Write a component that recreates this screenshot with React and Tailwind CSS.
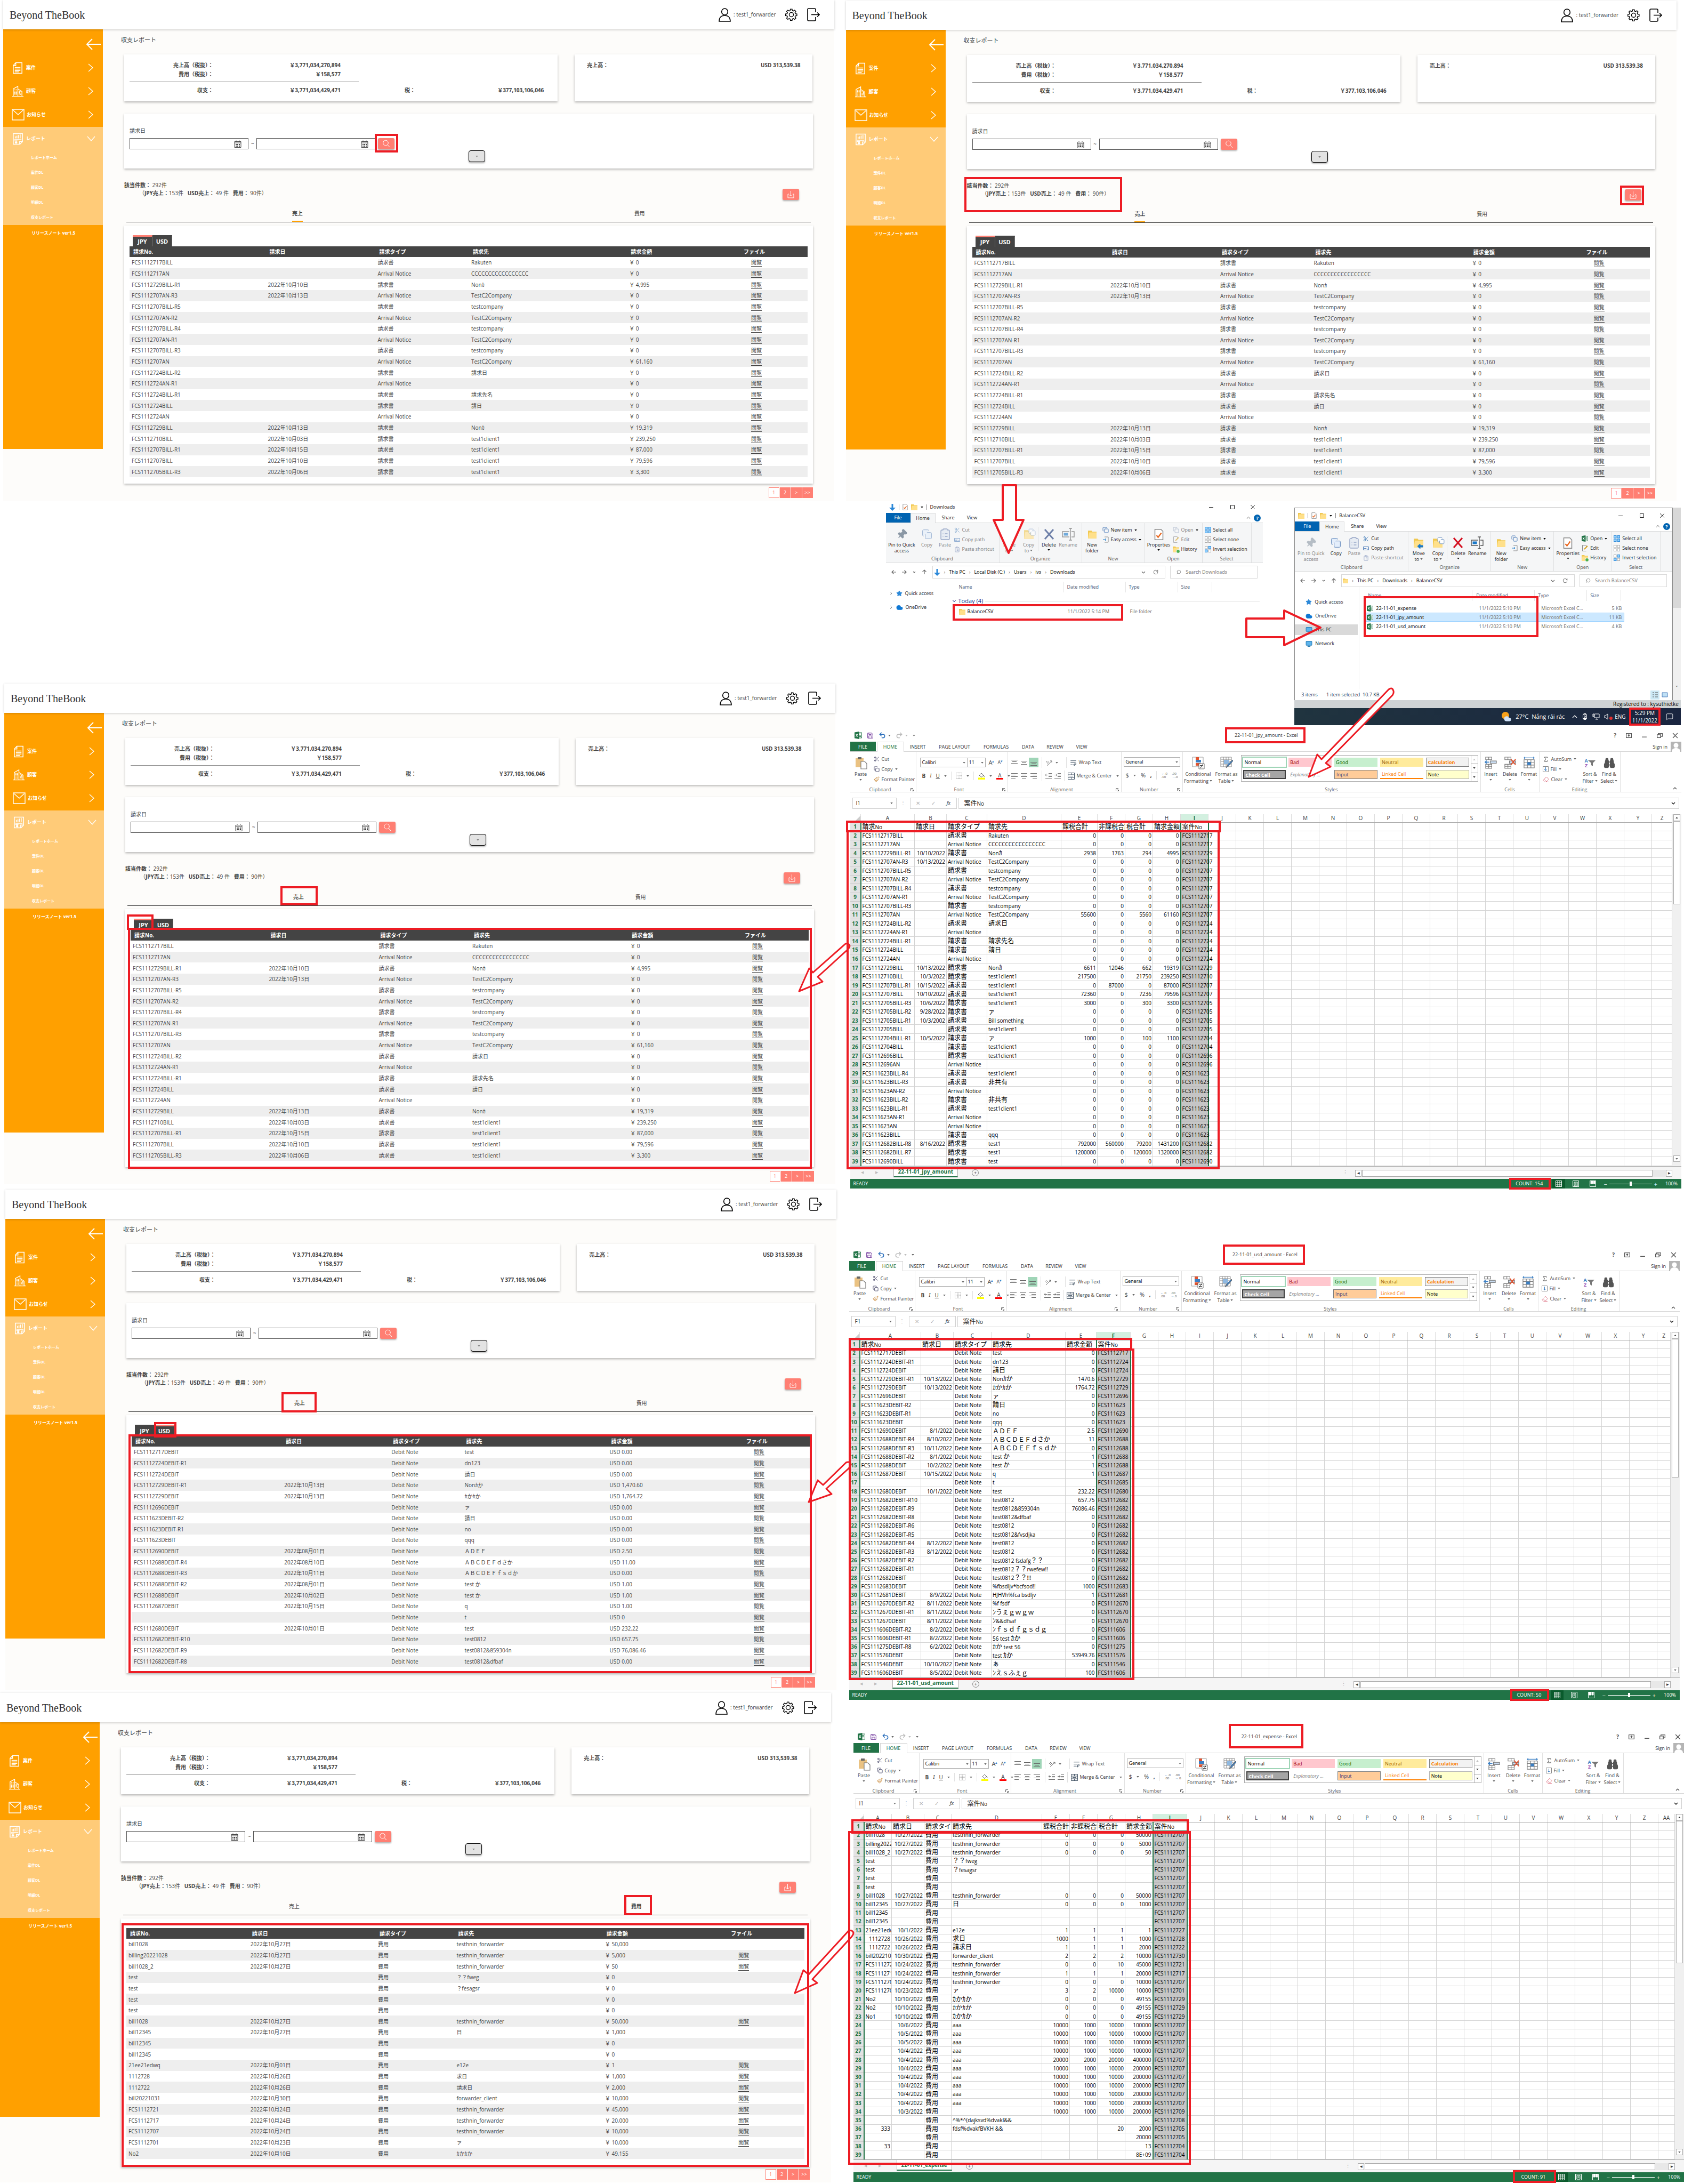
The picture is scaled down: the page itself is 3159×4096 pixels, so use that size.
import React from "react";
import {
  Scissors, Copy, ClipboardList, Pin, Save, Undo2, Redo2, Binoculars, Eraser, Paintbrush,
  Cloud, Monitor, Star, Search, RotateCw, MessageSquare, WrapText, Sigma,
} from "lucide-react";

const RED = "absolute z-10 pointer-events-none border-4 border-[#ed1c24]";

function Mark({ at }) {
  return at ? <span className={RED + " " + at} /> : null;
}

function Ico({ className, children, vb = "0 0 24 24", sw = 1.5, fill = "none" }) {
  return (
    <svg viewBox={vb} className={className} fill={fill} stroke="currentColor" strokeWidth={sw} aria-hidden="true">
      {children}
    </svg>
  );
}

function Caret({ className = "text-[#666]" }) {
  return (
    <svg viewBox="0 0 6 4" className={"h-[3px] w-[5px] shrink-0 " + className} aria-hidden="true">
      <path d="M0 0h6L3 4z" fill="currentColor" />
    </svg>
  );
}

/* ------------------------------------------------------------------ */
/* Balance report page                                                 */
/* ------------------------------------------------------------------ */

const JPY_ROWS = [
  ["FCS1112717BILL", "", "請求書", "Rakuten", "￥ 0", 1],
  ["FCS1112717AN", "", "Arrival Notice", "CCCCCCCCCCCCCCCCC", "￥ 0", 1],
  ["FCS1112729BILL-R1", "2022年10月10日", "請求書", "Nonｶ", "￥ 4,995", 1],
  ["FCS1112707AN-R3", "2022年10月13日", "Arrival Notice", "TestC2Company", "￥ 0", 1],
  ["FCS1112707BILL-R5", "", "請求書", "testcompany", "￥ 0", 1],
  ["FCS1112707AN-R2", "", "Arrival Notice", "TestC2Company", "￥ 0", 1],
  ["FCS1112707BILL-R4", "", "請求書", "testcompany", "￥ 0", 1],
  ["FCS1112707AN-R1", "", "Arrival Notice", "TestC2Company", "￥ 0", 1],
  ["FCS1112707BILL-R3", "", "請求書", "testcompany", "￥ 0", 1],
  ["FCS1112707AN", "", "Arrival Notice", "TestC2Company", "￥ 61,160", 1],
  ["FCS1112724BILL-R2", "", "請求書", "請求日", "￥ 0", 1],
  ["FCS1112724AN-R1", "", "Arrival Notice", "", "￥ 0", 1],
  ["FCS1112724BILL-R1", "", "請求書", "請求先名", "￥ 0", 1],
  ["FCS1112724BILL", "", "請求書", "請日", "￥ 0", 1],
  ["FCS1112724AN", "", "Arrival Notice", "", "￥ 0", 1],
  ["FCS1112729BILL", "2022年10月13日", "請求書", "Nonｶ", "￥ 19,319", 1],
  ["FCS1112710BILL", "2022年10月03日", "請求書", "test1client1", "￥ 239,250", 1],
  ["FCS1112707BILL-R1", "2022年10月15日", "請求書", "test1client1", "￥ 87,000", 1],
  ["FCS1112707BILL", "2022年10月10日", "請求書", "test1client1", "￥ 79,596", 1],
  ["FCS1112705BILL-R3", "2022年10月06日", "請求書", "test1client1", "￥ 3,300", 1],
];

const USD_ROWS = [
  ["FCS1112717DEBIT", "", "test", "USD 0.00"],
  ["FCS1112724DEBIT-R1", "", "dn123", "USD 0.00"],
  ["FCS1112724DEBIT", "", "請日", "USD 0.00"],
  ["FCS1112729DEBIT-R1", "2022年10月13日", "Nonｶか", "USD 1,470.60"],
  ["FCS1112729DEBIT", "2022年10月13日", "ｶかｶか", "USD 1,764.72"],
  ["FCS1112696DEBIT", "", "ァ", "USD 0.00"],
  ["FCS111623DEBIT-R2", "", "請日", "USD 0.00"],
  ["FCS111623DEBIT-R1", "", "no", "USD 0.00"],
  ["FCS111623DEBIT", "", "qqq", "USD 0.00"],
  ["FCS1112690DEBIT", "2022年08月01日", "ＡＤＥＦ", "USD 2.50"],
  ["FCS1112688DEBIT-R4", "2022年08月10日", "ＡＢＣＤＥＦｄさか", "USD 11.00"],
  ["FCS1112688DEBIT-R3", "2022年10月11日", "ＡＢＣＤＥＦｆｓｄか", "USD 0.00"],
  ["FCS1112688DEBIT-R2", "2022年08月01日", "test か", "USD 1.00"],
  ["FCS1112688DEBIT", "2022年10月02日", "test か", "USD 1.00"],
  ["FCS1112687DEBIT", "2022年10月15日", "q", "USD 1.00"],
  ["", "", "t", "USD 0"],
  ["FCS1112680DEBIT", "2022年10月01日", "test", "USD 232.22"],
  ["FCS1112682DEBIT-R10", "", "test0812", "USD 657.75"],
  ["FCS1112682DEBIT-R9", "", "test0812&859304n", "USD 76,086.46"],
  ["FCS1112682DEBIT-R8", "", "test0812&dfbaf", "USD 0.00"],
].map(([no, date, client, amount]) => [no, date, "Debit Note", client, amount, 1]);

const EXPENSE_ROWS = [
  ["bill1028", "2022年10月27日", "testhnin_forwarder", "￥ 50,000", 0],
  ["billing20221028", "2022年10月27日", "testhnin_forwarder", "￥ 5,000", 1],
  ["bill1028_2", "2022年10月27日", "testhnin_forwarder", "￥ 50", 1],
  ["test", "", "？？fweg", "￥ 0", 0],
  ["test", "", "？fesagsr", "￥ 0", 0],
  ["test", "", "", "￥ 0", 0],
  ["test", "", "", "￥ 0", 0],
  ["bill1028", "2022年10月27日", "testhnin_forwarder", "￥ 50,000", 1],
  ["bill12345", "2022年10月27日", "日", "￥ 1,000", 0],
  ["bill12345", "", "", "￥ 0", 0],
  ["bill12345", "", "", "￥ 0", 0],
  ["21ee21edwq", "2022年10月01日", "e12e", "￥ 1", 1],
  ["1112728", "2022年10月26日", "求日", "￥ 1,000", 1],
  ["1112722", "2022年10月26日", "請求日", "￥ 2,000", 1],
  ["bill20221031", "2022年10月30日", "forwarder_client", "￥ 10,000", 1],
  ["FCS1112721", "2022年10月24日", "testhnin_forwarder", "￥ 45,000", 1],
  ["FCS1112717", "2022年10月24日", "testhnin_forwarder", "￥ 20,000", 1],
  ["FCS1112707", "2022年10月24日", "testhnin_forwarder", "￥ 10,000", 1],
  ["FCS1112701", "2022年10月23日", "ァ", "￥ 10,000", 1],
  ["No2", "2022年10月10日", "ｶかｶか", "￥ 49,155", 0],
].map(([no, date, client, amount, file]) => [no, date, "費用", client, amount, file]);

const KINDS = {
  jpy: { rows: JPY_ROWS, cols: ["w-[20.1%]", "w-[16.2%]", "w-[13.8%]", "w-[23.3%]", "w-[11.6%]", "w-[15%]"] },
  usd: { rows: USD_ROWS, cols: ["w-[22.2%]", "w-[15.8%]", "w-[10.8%]", "w-[21.4%]", "w-[14.9%]", "w-[14.9%]"] },
  expense: { rows: EXPENSE_ROWS, cols: ["w-[18%]", "w-[18.8%]", "w-[11.6%]", "w-[21.9%]", "w-[11.9%]", "w-[17.8%]"] },
};

const UserIcon = () => (
  <Ico className="h-[26px] w-[23px]" vb="0 0 23 26" sw="1.6">
    <ellipse cx="11.5" cy="7" rx="5.8" ry="6" />
    <path d="M1 25c0-7 4-11 10.500-11S22 18 22 25z" />
  </Ico>
);

const GearIcon = () => (
  <Ico className="size-[23px]" sw="1.5">
    <path d="M10.300 1.500h3.400l.6 3 1.900.8 2.600-1.700 2.400 2.400-1.700 2.600.8 1.900 3 .6v3.400l-3 .6-.8 1.900 1.700 2.600-2.400 2.400-2.600-1.700-1.900.8-.6 3h-3.400l-.6-3-1.900-.8-2.600 1.700-2.400-2.400 1.700-2.600-.8-1.900-3-.6v-3.400l3-.6.8-1.900-1.700-2.600 2.400-2.400 2.600 1.700 1.900-.8z" transform="translate(0 -.3) scale(.98)" />
    <circle cx="12" cy="12" r="4.200" />
  </Ico>
);

const LogoutIcon = () => (
  <Ico className="h-[25px] w-[24px]" vb="0 0 24 25" sw="1.6">
    <path d="M16 8V3a2 2 0 0 0-2-2H3a2 2 0 0 0-2 2v19a2 2 0 0 0 2 2h11a2 2 0 0 0 2-2v-5M8 12.500h15M19 8.500l4 4-4 4" />
  </Ico>
);

const NAV = [
  { label: "案件", icon: <Ico className="size-[23px]" sw="1.6"><path d="M8 1.500h12v21H3V7zM8 1.500V7H3M6 11h11M6 14h11M6 17h11M6 19.500h8" /></Ico> },
  { label: "顧客", icon: <Ico className="size-[23px]" sw="1.4"><path d="M3 21V7l9-5v19M12 7l8 5v9M1 21.500h22" /><path d="M6 8v11M9 8v11M15 11v8M17.500 12v7" strokeWidth="2" strokeDasharray="1.500 1" /></Ico> },
  { label: "お知らせ", icon: <Ico className="size-[24px]" sw="1.4"><path d="M1 2h22v20H1zM2.500 3.500 12 12l9.500-8.500" /></Ico> },
];

function Sidebar({ height }) {
  return (
    <aside className={"w-[187px] shrink-0 bg-[#ffa000] text-white " + height}>
      <div className="flex h-[50px] justify-end pt-[17px] pr-1">
        <button type="button" aria-label="閉じる" className="h-[22px]">
          <Ico className="h-[22px] w-[28px]" vb="0 0 28 22" sw="2"><path d="M28 11H2M12 1 2 11l10 10" /></Ico>
        </button>
      </div>
      {NAV.map((n) => (
        <a key={n.label} href="#" className="flex h-[44px] items-center gap-1 pr-[18px] pl-4 text-[9px] font-bold">
          {n.icon}
          <span className="flex-1">{n.label}</span>
          <Ico className="h-[16px] w-[10px]" vb="0 0 10 16" sw="1.3"><path d="m1 1 8 7-8 7" /></Ico>
        </a>
      ))}
      <div className="mt-px h-[184px] bg-[#ffcb78]">
        <a href="#" className="flex h-[44px] items-center gap-1 pr-[14px] pl-4 text-[9px] font-bold">
          <Ico className="size-[23px]" sw="1.6"><path d="M3 1.500h18v16l-5 5H3zM7 7v4M10 6v5M13 4.500v6.500M16.500 3.500V11M5 13.500h14M5 16h6M15.500 22v-5H21" /><circle cx="8.500" cy="19" r="2.300" fill="currentColor" stroke="none" /></Ico>
          <span className="flex-1">レポート</span>
          <Ico className="h-[10px] w-[16px]" vb="0 0 16 10" sw="1.3"><path d="m1 1 7 8 7-8" /></Ico>
        </a>
        {["レポートホーム", "案件DL", "顧客DL", "明細DL", "収支レポート"].map((t) => (
          <a key={t} href="#" className="flex h-7 items-center pl-[52px] text-[7px] font-bold">{t}</a>
        ))}
      </div>
      <a href="#" className="block pt-2 pl-[53px] text-[8px] leading-[14px] font-bold">リリースノート ver1.5</a>
    </aside>
  );
}

const card = "bg-white shadow-[0_2px_4px_rgba(0,0,0,0.28)]";
const coral = "grid h-[21px] w-[31px] place-items-center rounded-[3px] bg-[#ff7f73] text-white shadow-[0_2px_3px_rgba(0,0,0,0.3)]";

function DateBox({ id, label }) {
  return (
    <div className="flex h-[21px] w-[223px] items-center border border-[#555] bg-white pr-3">
      <input id={id} aria-label={label} className="h-full min-w-0 flex-1 px-1 text-[10px] outline-none" />
      <Ico className="size-[14px] text-[#444]" vb="0 0 14 14" sw="1">
        <path d="M1 2.500h12v11H1zM1 5h12M4 .5v2.500M10 .5v2.500" />
        <path d="M3 8h8M3 11h8" strokeWidth="2" strokeDasharray="2 1" />
      </Ico>
    </div>
  );
}

function Report({ id, kind, className, side = "h-[787px]", marks = {} }) {
  const { rows, cols } = KINDS[kind];
  const expense = kind === "expense";
  const tabs = [["売上", !expense], ["費用", expense]];
  return (
    <section className={"relative bg-[#fdfcfa] font-['Open_Sans','Noto_Sans_CJK_JP',sans-serif] text-[10px] text-[#444] " + className}>
      <header className="relative flex h-[55px] items-center bg-white pr-[27px] pl-3 text-black shadow-[0_1px_4px_rgba(0,0,0,0.2)]">
        <h1 className="flex-1 font-['Liberation_Serif',serif] text-[20px] text-[#333]">Beyond TheBook</h1>
        <UserIcon />
        <span className="pr-[17px] pl-[5px] text-[10px] text-[#444]">: test1_forwarder</span>
        <button type="button" aria-label="設定" className="mr-[18px]"><GearIcon /></button>
        <button type="button" aria-label="ログアウト"><LogoutIcon /></button>
      </header>
      <div className="flex">
        <Sidebar height={side} />
        <main className="min-w-0 flex-1 pr-10 pl-10">
          <h2 className="-ml-1.5 pt-3 text-[11px] leading-4">収支レポート</h2>

          <div className="mt-[19px] grid grid-cols-[813fr_446fr] gap-8 font-bold">
            <div className={"flex h-[88px] pt-[12px] pr-[26px] pl-[10px] " + card}>
              <div className="w-[430px]">
                <div className="flex h-[17px] items-center pr-[34px]"><span className="w-[157px] text-right">売上高（税抜）：</span><span className="flex-1 text-right">￥3,771,034,270,894</span></div>
                <div className="flex h-[17px] items-center pr-[34px]"><span className="w-[157px] text-right">費用（税抜）：</span><span className="flex-1 text-right">￥158,577</span></div>
                <div className="mt-[5px] mb-[5px] h-px bg-[#888]" />
                <div className="flex h-[20px] items-center pr-[34px]"><span className="w-[157px] text-right">収支：</span><span className="flex-1 text-right">￥3,771,034,429,471</span></div>
              </div>
              <div className="flex flex-1 items-start justify-between pt-[45px] pl-[86px]">
                <span className="leading-5">税：</span><span className="leading-5">￥377,103,106,046</span>
              </div>
            </div>
            <div className={"flex h-[88px] justify-between px-[23px] pt-[12px] leading-[17px] " + card}>
              <span>売上高：</span><span>USD 313,539.38</span>
            </div>
          </div>

          <div className={"mt-[23px] h-[103px] px-[10px] pt-[24px] " + card}>
            <label htmlFor={id + "-from"} className="block leading-4">請求日</label>
            <div className="mt-[6px] flex items-center">
              <DateBox id={id + "-from"} label="請求日 開始" />
              <span className="w-[15px] text-center">~</span>
              <DateBox id={id + "-to"} label="請求日 終了" />
              <button type="button" aria-label="検索" className={"relative ml-[5px] " + coral}>
                <Ico className="size-[15px]" vb="0 0 15 15" sw="1"><circle cx="6.500" cy="6" r="4.800" /><path d="m10 9.500 4 4.500" /></Ico>
                <Mark at={marks.search} />
              </button>
            </div>
            <button type="button" aria-label="詳細" className="mt-0.5 ml-[636px] grid h-[22px] w-[31px] place-items-center rounded-[4px] border border-black bg-[#e3e3e3] shadow-[0_2px_3px_rgba(0,0,0,0.3)]">
              <Caret className="text-[#888]" />
            </button>
          </div>

          <div className="relative mt-6 flex h-[35px] items-end justify-between pr-[26px]">
            <div className="h-full leading-[15px] whitespace-pre">
              <p><b>該当件数：</b> 292件</p>
              <p className="pl-7">（<b>JPY売上：</b>153件   <b>USD売上：</b> 49 件   <b>費用：</b> 90件）</p>
            </div>
            <Mark at={marks.counts} />
            <button type="button" aria-label="ダウンロード" className={"relative " + coral}>
              <Ico className="size-[15px]" vb="0 0 15 15" sw="1"><path d="M4 7H2v7h11V7h-2M7.500 1v10M5 8.500 7.500 11 10 8.500" /></Ico>
              <Mark at={marks.download} />
            </button>
          </div>

          <div className="mx-[4px] flex h-[42px] border-b border-[#444]">
            {tabs.map(([t, on]) => (
              <button key={t} type="button" className={"flex flex-1 items-start justify-center pt-[18px] leading-[14px] " + (on ? "font-bold" : "")}>
                <span className="relative">
                  {t}
                  {on && !expense && <i className="absolute inset-x-0 -bottom-[9px] h-0.5 bg-[#ffa000]" />}
                  {on && <Mark at={marks.tab} />}
                </span>
              </button>
            ))}
          </div>

          <div className={"mt-[6px] px-[10px] pt-[18px] " + (expense ? "pb-[15px] " : "pb-[12px] ") + card}>
            {!expense && (
              <div className="flex pl-1.5">
                {["JPY", "USD"].map((c) => {
                  const on = c.toLowerCase() === kind;
                  return (
                    <button key={c} type="button" className={"relative h-[21px] w-[37px] border-t-[3px] border-r border-r-[#777] bg-[#444] text-[11px] leading-[18px] font-bold text-white " + (on ? "border-t-[#ff7f73]" : "border-t-[#444]")}>
                      {c}
                      {on && <Mark at={marks.currency} />}
                    </button>
                  );
                })}
              </div>
            )}
            <div className="relative">
              <table className="h-[433px] w-full table-fixed border-collapse text-left leading-[14px]">
                <thead>
                  <tr className="h-5 bg-[#444] text-white">
                    {["請求No.", "請求日", "請求タイプ", "請求先", "請求金額"].map((h, i) => (
                      <th key={h} className={"py-0 pl-[7px] font-bold " + cols[i]}>{h}</th>
                    ))}
                    <th className={"pr-2 text-center font-bold " + cols[5]}>ファイル</th>
                  </tr>
                </thead>
                <tbody>
                  {rows.map((r, i) => (
                    <tr key={i} className="odd:bg-white even:bg-[#eee]">
                      {r.slice(0, 5).map((c, j) => <td key={j} className="h-5 py-0 pl-[4px] whitespace-nowrap">{c}</td>)}
                      <td className="p-0 text-center">{r[5] ? <a href="#" className="border-b border-[#444]">閲覧</a> : null}</td>
                    </tr>
                  ))}
                </tbody>
              </table>
              <Mark at={marks.table} />
            </div>
          </div>

          <nav className={"flex justify-end gap-px pb-[5px] " + (expense ? "mt-[4px]" : "mt-[7px]")}>
            {["1", "2", ">", ">>"].map((p, i) => (
              <button key={p} type="button" className={"h-5 w-5 border border-[#ff7f73] text-[9px] leading-4 " + (i ? "bg-[#ff7f73] text-white" : "bg-white text-[#ff7f73]")}>{p}</button>
            ))}
          </nav>
        </main>
      </div>
    </section>
  );
}

/* ------------------------------------------------------------------ */
/* File explorer windows                                               */
/* ------------------------------------------------------------------ */

const FolderGlyph = ({ className = "h-[11px] w-[12px]" }) => (
  <svg viewBox="0 0 12 11" className={"shrink-0 " + className} aria-hidden="true">
    <path d="M0 0h5l1 1.500h6V11H0z" fill="#f0c850" /><path d="M1.500 2.500H12V11H0z" fill="#ffe08a" />
  </svg>
);

const DownGlyph = () => (
  <svg viewBox="0 0 12 13" className="h-[13px] w-[12px] shrink-0" aria-hidden="true"><path d="M4.500 0h3v7H12l-6 6-6-6h4.500z" fill="#2b88d8" /></svg>
);

const PageCheck = ({ className }) => (
  <Ico className={"shrink-0 " + className} vb="0 0 12 14" sw="1"><path d="M1 .5h7.500L11 3v10.500H1z" fill="#fff" stroke="#888" /><path d="m3 8 2 2.500L9 5" stroke="#e8641b" strokeWidth="1.500" /></Ico>
);

const ExcelGlyph = ({ className = "size-3" }) => (
  <svg viewBox="0 0 14 14" className={"shrink-0 " + className} aria-hidden="true">
    <path d="M6 2h7.500v10H6z" fill="#fff" stroke="#217346" /><path d="M8 4.500h4M8 7h4M8 9.500h4" stroke="#217346" />
    <path d="M0 1.500 8.500 0v14L0 12.500z" fill="#217346" /><path d="m2.500 4.500 3.500 5M6 4.500l-3.500 5" stroke="#fff" strokeWidth="1.200" />
  </svg>
);

function RBig({ icon, lines, dim, caret, w }) {
  return (
    <button type="button" className={"flex h-[58px] flex-col items-center pt-[7px] leading-[11px] whitespace-nowrap " + w + (dim ? " text-[#838383]" : "")}>
      <span className={"grid h-[28px] place-items-center" + (dim ? " opacity-60" : "")}>{icon}</span>
      {lines.map((l, i) => <span key={l} className="flex items-center gap-0.5">{l}{caret && i === lines.length - 1 && lines.length > 1 ? <Caret /> : null}</span>)}
      {caret && lines.length === 1 ? <span className="pt-[3px]"><Caret className="text-black" /></span> : null}
    </button>
  );
}

function RSmall({ items }) {
  return (
    <div className="flex flex-col pt-[4px]">
      {items.map(([icon, t, dim, caret]) => (
        <button type="button" key={t} className={"flex h-[18px] items-center gap-1 whitespace-nowrap " + (dim ? "text-[#838383]" : "")}>
          <span className={dim ? "opacity-60" : ""}>{icon}</span>{t}{caret ? <Caret className="text-black" /> : null}
        </button>
      ))}
    </div>
  );
}

function RGroup({ label, w, children }) {
  return (
    <div className={"flex flex-col border-r border-[#e0e1e2] " + w}>
      <div className="flex h-[61px] justify-start">{children}</div>
      <span className="text-center leading-3 text-[#5a5a5a]">{label}</span>
    </div>
  );
}

const SqGrid = ({ mode }) => (
  <svg viewBox="0 0 12 12" className="size-3" aria-hidden="true">
    {[[0, 0], [6.500, 0], [0, 6.500], [6.500, 6.500]].map(([x, y], i) => {
      const on = mode === "all" || (mode === "invert" && (i === 1 || i === 2));
      return <rect key={i} x={x + 0.500} y={y + 0.500} width="4.500" height="4.500" fill={on ? "#8fd0ff" : "#fff"} stroke={on ? "#2b88d8" : "#aaa"} />;
    })}
  </svg>
);

function Explorer({ title, lead, tools, path, search, side, children, sel, footer, className }) {
  const has = sel;
  return (
    <section className={"flex flex-col bg-white font-['Open_Sans',sans-serif] text-[9px] text-[#222] " + className}>
      <header className="flex h-[22px] shrink-0 items-center gap-[6px] pr-[14px] pl-[6px]">
        {lead}<i className="h-2.5 w-px bg-[#888]" /><PageCheck className="h-[12px] w-[10px]" /><FolderGlyph /><Caret className="text-black" /><i className="h-2.5 w-px bg-[#888]" />
        <span className="flex-1">{title}</span>
        <button type="button" aria-label="Minimize" className="mr-[24px]"><Ico className="size-2.5" vb="0 0 10 10" sw="1"><path d="M1 5.500h8" /></Ico></button>
        <button type="button" aria-label="Maximize" className="mr-[22px]"><Ico className="size-2.5" vb="0 0 10 10" sw="1"><path d="M1.500 1.500h7v7h-7z" /></Ico></button>
        <button type="button" aria-label="Close"><Ico className="size-2.5" vb="0 0 10 10" sw="1"><path d="m1 1 8 8M9 1 1 9" /></Ico></button>
      </header>
      <nav className="flex h-[19px] shrink-0 items-stretch border-b border-[#dadbdc] leading-[18px]">
        <button type="button" className="w-[46px] bg-[#0063b1] text-white">File</button>
        <button type="button" className="-mb-px w-[47px] border border-b-0 border-[#dadbdc] bg-[#f5f6f7]">Home</button>
        <button type="button" className="w-[48px]">Share</button>
        <button type="button" className="w-[42px]">View</button>
        <span className="flex-1" />
        <Ico className="my-auto mr-1.5 size-2 text-[#888]" vb="0 0 8 8" sw="1"><path d="m1 6 3-4 3 4" /></Ico>
        <button type="button" className="my-auto mr-1 size-[13px] rounded-full bg-[#0063b1] text-[9px] leading-[13px] font-bold text-white">?</button>
      </nav>
      <div className="flex h-[75px] shrink-0 border-b border-[#dadbdc] bg-[#f5f6f7]">
        <RGroup label="Clipboard" w="w-[213px]">
          <RBig w="w-[60px]" dim={has} lines={["Pin to Quick", "access"]} icon={<Pin className="size-5 rotate-45 fill-[#8b98a5] text-[#8b98a5]" />} />
          <RBig w="w-[34px]" dim={!has} lines={["Copy"]} icon={<Copy className="size-5 fill-[#e4eefb] text-[#5b83b8]" strokeWidth={1.2} />} />
          <RBig w="w-[34px]" dim lines={["Paste"]} icon={<ClipboardList className="size-6 fill-[#dfe6f2] text-[#5b73a8]" strokeWidth={1.4} />} />
          <RSmall items={[
            [<Scissors className="size-[11px] text-[#2b6cb0]" />, "Cut", !has],
            [<Ico className="size-[11px]" vb="0 0 11 11" sw="1"><path d="M.5 2.500h10v6H.5zM2 5l1 2 1-2 1 2 1-2M7.500 7h2" stroke="#4a7ab8" /></Ico>, "Copy path", !has],
            [<ClipboardList className="size-[11px] text-[#5b73a8]" />, "Paste shortcut", true],
          ]} />
        </RGroup>
        <RGroup label="Organize" w="w-[155px]">
          <RBig w="w-[38px]" dim={!has} caret lines={["Move", "to"]} icon={<span className="relative"><FolderGlyph className="h-[23px] w-[18px]" /><Ico className="absolute right-0 bottom-0 size-3 text-[#1979ca]" vb="0 0 12 12" fill="#1979ca" sw="1"><path d="M6 2v3h5v3H6v3L1 6.500z" /></Ico></span>} />
          <RBig w="w-[34px]" dim={!has} caret lines={["Copy", "to"]} icon={<span className="relative"><FolderGlyph className="h-[23px] w-[18px]" /><Copy className="absolute top-0 -right-1 size-3.5 fill-white text-[#5b83b8]" strokeWidth={1.5} /></span>} />
          <i className="mt-2 h-[44px] w-px bg-[#e0e1e2]" />
          <RBig w="w-[40px]" caret lines={["Delete"]} icon={<Ico className={"h-6 w-[20px] " + (has ? "text-[#d40f1f]" : "text-[#6d7fa8]")} vb="0 0 20 22" sw="3"><path d="m2 2 16 18M18 2 2 20" /></Ico>} />
          <RBig w="w-[32px]" dim={!has} lines={["Rename"]} icon={<Ico className="h-6 w-[24px] text-[#555]" vb="0 0 24 24" sw="1.400"><path d="M14 7H1v10h13M18 7h5v10h-5M13 1h6M13 23h6M16 1v22" /><path d="M3.500 9.500h8v5h-8z" fill="#1979ca" stroke="none" /></Ico>} />
        </RGroup>
        <RGroup label="New" w="w-[118px]">
          <RBig w="w-[38px]" lines={["New", "folder"]} icon={<FolderGlyph className="h-[23px] w-[16px]" />} />
          <RSmall items={[
            [<Copy className="size-[12px] text-[#4a7ab8]" />, "New item", false, true],
            [<Ico className="size-[12px]" vb="0 0 12 12" sw="1"><path d="M4 1h7v10H4" stroke="#888" /><path d="M1 6h6M5 4l2 2-2 2" stroke="#1979ca" /></Ico>, "Easy access", false, true],
          ]} />
        </RGroup>
        <RGroup label="Open" w="w-[108px]">
          <RBig w="w-[52px]" caret lines={["Properties"]} icon={<PageCheck className="h-[25px] w-[18px]" />} />
          <RSmall items={[
            [has ? <ExcelGlyph className="size-[12px]" /> : <Copy className="size-[12px] text-[#8a9ab8]" />, "Open", !has, true],
            [<Ico className="size-[12px]" vb="0 0 12 12" sw="1"><path d="M1.500.5h7V5M1.500.5v11h7" stroke="#888" /><path d="m5 8 6-6" stroke="#d8a01b" strokeWidth="1.800" /></Ico>, "Edit", !has],
            [<span className="relative block"><FolderGlyph /><span className="absolute -right-0.5 -bottom-0.5 size-[8px] rounded-full border border-white bg-[#4caf50]" /></span>, "History"],
          ]} />
        </RGroup>
        <RGroup label="Select" w="w-[92px]">
          <span className="w-1" />
          <RSmall items={[[<SqGrid mode="all" />, "Select all"], [<SqGrid mode="none" />, "Select none"], [<SqGrid mode="invert" />, "Invert selection"]]} />
        </RGroup>
      </div>
      <div className="mt-[5px] flex h-[24px] shrink-0 items-stretch gap-[9px] pr-[10px] pl-[10px]">
        <span className="flex w-[68px] items-center justify-between text-[#666]">
          {["M9 5H1M4.500 1.500 1 5l3.500 3.500", "M1 5h8M5.500 1.500 9 5 5.500 8.500", "m3 4 2 2 2-2", "M5 9V1M1.500 4.500 5 1l3.500 3.500"].map((d) => <Ico key={d} className="size-2.5" vb="0 0 10 10" sw="1.200"><path d={d} /></Ico>)}
        </span>
        <div className="flex flex-1 items-center gap-[7px] border border-[#d9d9d9] pr-1.5 pl-0.5 text-black">
          {tools}
          {path.map((p) => <React.Fragment key={p}><span className="text-[#666]">›</span><span>{p}</span></React.Fragment>)}
          <span className="flex-1" />
          <Ico className="size-2.5 text-[#666]" vb="0 0 10 10" sw="1.200"><path d="m2 4 3 3 3-3" /></Ico>
          <RotateCw className="mx-1.5 size-2.5 text-[#555]" />
        </div>
        <label className="flex w-[164px] items-center gap-2 border border-[#d9d9d9] pl-2.5">
          <Search className="size-2.5 -scale-x-100 text-[#888]" />
          <input placeholder={search} aria-label={search} className="min-w-0 flex-1 text-[9px] outline-none placeholder:text-[#777]" />
        </label>
      </div>
      <div className="flex flex-1">
        <ul className={"shrink-0 pt-[18px] " + (has ? "w-[121px] border-r border-[#eee]" : "w-[121px]")}>
          {side.map(([icon, t, on]) => (
            <li key={t} className={"mb-[6px] flex h-[20px] items-center gap-[5px] " + (on ? "mr-[2px] bg-[#d9d9d9] " : "") + (has ? "pl-[20px]" : "pl-[6px]")}>
              {!has && <Ico className="size-2 text-[#888]" vb="0 0 8 8" sw="1"><path d="m2 1 3 3-3 3" /></Ico>}{icon}{t}
            </li>
          ))}
        </ul>
        <div className="min-w-0 flex-1">{children}</div>
      </div>
      {footer}
    </section>
  );
}

const QUICK = [<Star className="size-[12px] fill-[#2b88d8] text-[#2b88d8]" />, "Quick access"];
const ONE = [<Cloud className="size-[13px] fill-[#0f78d4] text-[#0f78d4]" />, "OneDrive"];
const NETWORK = [<Monitor className="size-[13px] fill-[#5db5ee] text-[#2b7fb8]" />, "Network"];
const PC = [<Monitor className="size-[13px] fill-[#5db5ee] text-[#2b7fb8]" />, "This PC", true];

const fileCols = ["w-[212px] pl-[16px]", "w-[117px] pl-[7px]", "w-[98px] pl-[6px]", "w-[64px] pl-[6px]"];

function FileHead() {
  return (
    <div className="flex h-[34px] pt-[6px] text-[#4c607a]">
      {["Name", "Date modified", "Type", "Size"].map((h, i) => (
        <span key={h} className={"h-[20px] border-r border-[#e5e5e5] leading-[20px] " + fileCols[i]}>{h}</span>
      ))}
    </div>
  );
}

function DownloadsWindow() {
  return (
    <Explorer
      className="h-[280px] min-w-0 flex-[708]"
      title="Downloads" lead={<DownGlyph />} tools={<DownGlyph />}
      path={["This PC", "Local Disk (C:)", "Users", "ivs", "Downloads"]} search="Search Downloads"
      side={[QUICK, ONE]}
    >
      <FileHead />
      <div className="flex items-center gap-1 pl-[3px] text-[11px] leading-4 text-[#1e3287]">
        <Ico className="size-2" vb="0 0 8 8" sw="1"><path d="m1 2 3 4 3-4" /></Ico>Today (4)<i className="mr-1.5 h-px flex-1 bg-[#ddd]" />
      </div>
      <div className="relative flex h-[24px] items-center">
        <span className="flex w-[220px] items-center gap-1 pl-[16px] text-black"><FolderGlyph />BalanceCSV</span>
        <span className="w-[117px] text-[#6d6d6d]">11/1/2022 5:14 PM</span>
        <span className="text-[#6d6d6d]">File folder</span>
        <Mark at="-top-[2px] -bottom-[5px] left-[4px] w-[320px]" />
      </div>
    </Explorer>
  );
}

function BalanceWindow() {
  const files = [["22-11-01_expense", "5 KB"], ["22-11-01_jpy_amount", "11 KB"], ["22-11-01_usd_amount", "4 KB"]];
  return (
    <div className="flex min-w-0 flex-[725] flex-col pt-[12px]">
      <div className="flex h-[361px] bg-[linear-gradient(#d8d8d8_52%,#f0f0f0_52%)]">
        <Explorer
          sel className="min-w-0 flex-1 border-x border-t border-[#888] pt-[3px]"
          title="BalanceCSV" lead={<FolderGlyph />} tools={<FolderGlyph className="h-[13px] w-[10px]" />}
          path={["This PC", "Downloads", "BalanceCSV"]} search="Search BalanceCSV"
          side={[QUICK, ONE, PC, NETWORK]}
          footer={
            <footer className="flex h-[20px] items-center gap-4 pl-[12px] text-[#1e3250]">
              <span>3 items</span><span className="flex-1 whitespace-pre">1 item selected  10.7 KB</span>
              <span className="grid size-[17px] place-items-center bg-[#cce8f5] text-[#555]"><Ico className="size-3" vb="0 0 12 12" sw="1"><path d="M1 2h3M1 6h3M1 10h3M6 2h5M6 6h5M6 10h5" /></Ico></span>
              <Ico className="-ml-3 mr-2 size-3 text-[#4a7ab8]" vb="0 0 12 12" sw="1"><path d="M1 2h10v8H1z" fill="#bfe0f5" /></Ico>
            </footer>
          }
        >
          <FileHead />
          <div className="relative -mt-[3px]">
            {files.map(([n, s], i) => (
              <div key={n} className={"ml-[11px] flex h-[17px] w-[486px] items-center border " + (i === 1 ? "border-[#99d1ff] bg-[#cce8ff]" : "border-transparent")}>
                <span className="flex w-[212px] items-center gap-[5px] pl-0.5 text-black"><ExcelGlyph />{n}</span>
                <span className="w-[117px] text-[#6d6d6d]">11/1/2022 5:10 PM</span>
                <span className="flex-1 text-[#6d6d6d]">Microsoft Excel C...</span>
                <span className="pr-1 text-[#6d6d6d]">{s}</span>
              </div>
            ))}
            <Mark at="-top-[14px] left-[8px] h-[77px] w-[328px]" />
          </div>
        </Explorer>
        <div className="flex w-[15px] flex-col justify-end pb-[22px] text-center text-[8px] text-[#555]">⌄</div>
      </div>
      <p className="h-[15px] bg-[#cfd3d5] pr-1 text-right font-['Open_Sans',sans-serif] text-[10px] leading-[15px] text-black">Registered to : kysuthietke</p>
      <div className="flex h-[32px] items-center justify-end gap-[8px] bg-[linear-gradient(90deg,#20343f,#1a2540)] pr-[14px] font-['Open_Sans',sans-serif] text-[10px] text-white">
        <span className="relative size-[18px]"><i className="absolute top-0 left-0 size-3.5 rounded-full bg-[#f7a11b]" /><Cloud className="absolute right-0 -bottom-0.5 size-3.5 fill-[#cfe2fa] text-[#cfe2fa]" /></span>
        <span className="pr-[6px] text-[11px] whitespace-pre">27°C  Nắng rải rác</span>
        <Ico className="size-2.5" vb="0 0 10 10" sw="1.200"><path d="m1 7 4-4 4 4" /></Ico>
        <Ico className="size-3" vb="0 0 12 12" sw="1"><path d="M4 .5h4v2H4zM2.500 2.500h7v7h-7zM4 9.500h4v2H4z" /><circle cx="6" cy="6" r="1.500" /></Ico>
        <Ico className="size-3.5" vb="0 0 14 12" sw="1"><path d="M4 1h9v7H4zM6 11h5M8.500 8v3M1 1h2v5H1z" /></Ico>
        <span className="relative"><Ico className="size-3" vb="0 0 12 12" sw="1"><path d="M1 4h2l4-3v10L3 8H1z" /></Ico><i className="absolute -right-1 bottom-0 size-[6px] rounded-full bg-[#e03030]" /></span>
        <span>ENG</span>
        <span className="relative mx-1 text-center text-[10px] leading-[14px]">5:29 PM<br />11/1/2022<Mark at="-inset-x-[6px] -top-[3px] -bottom-[3px]" /></span>
        <MessageSquare className="ml-1 size-3.5" strokeWidth={1.5} />
      </div>
    </div>
  );
}

/* ------------------------------------------------------------------ */
/* Spreadsheet windows                                                 */
/* ------------------------------------------------------------------ */

const CJK = /([\u2e80-\u9fff\uff00-\uffef]+)/;

function Runs({ text }) {
  return text.split(CJK).map((t, i) => (i % 2 ? <span key={i} className="font-['Noto_Sans_CJK_JP',sans-serif] text-[12px]">{t}</span> : t));
}

const sep = <i className="mx-[6px] h-5 w-px bg-[#e1e1e1]" />;
const Lines = ({ d, className = "" }) => <Ico className={"size-[12px] text-[#666] " + className} vb="0 0 12 12" sw="1"><path d={d} /></Ico>;

function XGroup({ label, w, children }) {
  return (
    <div className={"flex shrink-0 flex-col border-r border-[#e1e1e1] " + w}>
      <div className="flex h-[66px]">{children}</div>
      <span className="flex items-center leading-[9px] text-[#666]"><span className="flex-1 text-center text-[9px]">{label}</span>{label !== "Styles" && label !== "Cells" && label !== "Editing" ? <Ico className="mr-1 size-[6px]" vb="0 0 6 6" sw="1"><path d="M.5 5V.5H5M2.500 2.500 5.500 5.500M5.500 3v2.500H3" /></Ico> : null}</span>
    </div>
  );
}

function XBig({ icon, lines, w, inline }) {
  return (
    <button type="button" className={"flex flex-col items-center pt-[6px] leading-[13px] whitespace-nowrap " + w}>
      <span className="grid h-[29px] place-items-center">{icon}</span>
      {lines.map((l, i) => <span key={l} className="flex items-center gap-0.5">{l}{inline && i === 1 ? <Caret /> : null}</span>)}
      {!inline && <span className="flex h-2 items-center"><Caret /></span>}
    </button>
  );
}

const CellsIcon = ({ mode }) => (
  <Ico className="size-[23px] text-[#777]" vb="0 0 24 24" sw="1.200">
    {mode === "format" ? (
      <><path d="M2 6h20v16H2zM2 11h20M2 16.500h20M8.500 6v16M15.500 6v16" /><path d="M8.500 11h7v5.500h-7z" fill="#3b7fc4" stroke="none" /><path d="M2 2.500h20M4 .5 2 2.500l2 2M20 .5l2 2-2 2" stroke="#3b7fc4" /></>
    ) : (
      <><path d="M2 1h12v5H2zM8 1v5M2 15h12v8H2zM8 15v8M2 19h12" /><path d="M11 8.500h12v4.500H11z" fill="#c8dbf0" />{mode === "insert" ? <path d="M9 10.800H1M4 8l-3 2.800L4 13.500" stroke="#3b7fc4" strokeWidth="1.800" /> : <path d="m14 5 9 11M23 5l-9 11" stroke="#e0532f" strokeWidth="2" />}</>
    )}
  </Ico>
);

const STYLES = [
  ["Normal", "bg-white text-black outline-2 outline-[#9fd5b7]"],
  ["Bad", "bg-[#ffc7ce] text-[#9c0006]"],
  ["Good", "bg-[#c6efce] text-[#006100]"],
  ["Neutral", "bg-[#ffeb9c] text-[#9c6500]"],
  ["Calculation", "border border-[#7f7f7f] bg-[#f2f2f2] font-bold text-[#fa7d00]"],
  ["Check Cell", "border-2 border-double border-[#3f3f3f] bg-[#a5a5a5] font-bold text-white"],
  ["Explanatory ...", "bg-white text-[#7f7f7f] italic"],
  ["Input", "border border-[#7f7f7f] bg-[#ffcc99] text-[#3f3f76]"],
  ["Linked Cell", "border-b-2 border-[#ff8001] bg-white text-[#fa7d00]"],
  ["Note", "border border-[#b2b2b2] bg-[#ffffcc] text-black"],
];

function Ribbon() {
  return (
    <div className="flex h-[76px] border-b border-[#d5d5d5] text-[#444]">
      <XGroup label="Clipboard" w="w-[124px]">
        <XBig w="w-[40px]" lines={["Paste"]} icon={<Ico className="size-6" vb="0 0 24 24" sw="1.200"><path d="M2 3h15v17H2z" fill="#eac282" stroke="none" /><path d="M6 1h7v4H6z" fill="#666" stroke="none" /><path d="M12 9h7l4 4v10H12z" fill="#fff" stroke="#777" /></Ico>} />
        <div className="flex flex-col pt-[4px] pl-1">
          {[[<Scissors className="size-[11px] text-[#446]" />, "Cut"], [<Copy className="size-[11px] text-[#446]" />, "Copy", 1], [<Paintbrush className="size-[11px] text-[#c98a3a]" />, "Format Painter"]].map(([ic, t, c]) => (
            <button key={t} type="button" className="flex h-[19px] items-center gap-1 whitespace-nowrap">{ic}{t}{c ? <Caret /> : null}</button>
          ))}
        </div>
      </XGroup>
      <XGroup label="Font" w="w-[172px]">
        <div className="flex flex-col pt-[10px] pl-[7px]">
          <div className="flex h-[20px] items-center">
            <span className="flex h-[18px] w-[89px] items-center justify-between border border-[#ababab] px-[3px] text-black">Calibri<Caret /></span>
            <span className="-ml-px flex h-[18px] w-[35px] items-center justify-between border border-[#ababab] px-[3px] text-black">11<Caret /></span>
            <span className="pl-1.5 text-[11px]">A<sup className="text-[7px] text-[#3b7fc4]">▴</sup></span>
            <span className="pl-1.5 text-[9px]">A<sup className="text-[7px] text-[#3b7fc4]">▾</sup></span>
          </div>
          <div className="mt-[5px] flex h-[20px] items-center gap-[8px] pl-1 text-[10px]">
            <b>B</b><i className="font-serif">I</i><u>U</u><Caret />
            <i className="h-4 w-px bg-[#e1e1e1]" />
            <Ico className="size-[12px] text-[#888]" vb="0 0 12 12" sw="1"><path d="M.5.5h11v11H.5zM6 0v12M0 6h12" strokeDasharray="1 1" /></Ico><Caret />
            <i className="h-4 w-px bg-[#e1e1e1]" />
            <Ico className="size-[13px] text-[#666]" vb="0 0 13 13" sw="1"><path d="m2 5 4-4 4 4-4 3.500zM10 5l1.500 3" /><path d="M0 9.500h13V13H0z" fill="#ffff00" stroke="none" /></Ico><Caret />
            <span className="h-[13px] w-[13px] border-b-[3px] border-[#ff0000] text-center leading-[10px]">A</span><Caret />
          </div>
        </div>
      </XGroup>
      <XGroup label="Alignment" w="w-[213px]">
        <div className="flex flex-col pt-[10px] pl-1.5">
          <div className="flex h-[20px] items-center">
            <Lines d="M0 1.500h12M2 4.500h8M0 7.500h12" className="mr-[6px]" /><Lines d="M0 3.500h12M2 6.500h8M0 9.500h12" className="mr-[3px]" />
            <span className="grid size-[18px] place-items-center bg-[#9fd5b7]"><Lines d="M0 5.500h12M2 8.500h8M0 11.500h12" /></span>
            {sep}<Ico className="mr-1.5 size-[13px] text-[#666]" vb="0 0 13 13" sw="1"><path d="M3 12 12 3M12 3v3M12 3H9M1 6l3-3M3 8l4-4" /></Ico><Caret /><span className="w-[9px]" />{sep}
            <WrapText className="mr-1 size-[13px] text-[#456]" /><span>Wrap Text</span>
          </div>
          <div className="mt-[5px] flex h-[20px] items-center">
            <Lines d="M0 1.500h12M0 4.500h8M0 7.500h12M0 10.500h8" className="mr-[6px]" /><Lines d="M0 1.500h12M2 4.500h8M0 7.500h12M2 10.500h8" className="mr-[6px]" /><Lines d="M0 1.500h12M4 4.500h8M0 7.500h12M4 10.500h8" className="mr-[3px]" />
            {sep}<Lines d="M6 1.500h6M6 4.500h6M6 7.500h6M0 10.500h12M5 4.500H0M2 2.500 0 4.500l2 2" className="mr-[5px]" /><Lines d="M6 1.500h6M6 4.500h6M6 7.500h6M0 10.500h12M0 4.500h5M3 2.500l2 2-2 2" />{sep}
            <Ico className="mr-1 size-[13px] text-[#456]" vb="0 0 13 13" sw="1"><path d="M.5.500h12v12H.5zM.5 4h12M.5 9h12M6.500 0v4M6.500 9v4M3 6.500h7" /></Ico><span className="pr-2">Merge &amp; Center</span><Caret />
          </div>
        </div>
      </XGroup>
      <XGroup label="Number" w="w-[115px]">
        <div className="flex flex-1 flex-col px-1 pt-[10px]">
          <span className="flex h-[18px] items-center justify-between border border-[#ababab] px-[3px] text-black">General<Caret /></span>
          <div className="mt-[6px] flex h-[20px] items-center justify-between px-1 text-[11px]">
            <span>$</span><Caret /><span>%</span><b>,</b><i className="h-4 w-px bg-[#e1e1e1]" />
            <span className="text-[6px] leading-[6px]"><span className="text-[#3b7fc4]">←</span>.0<br />.00</span><span className="text-[6px] leading-[6px]">.00<br /><span className="text-[#3b7fc4]">→</span>.0</span>
          </div>
        </div>
      </XGroup>
      <XGroup label="Styles" w="w-[559px]">
        <XBig w="w-[58px]" inline lines={["Conditional", "Formatting"]} icon={<Ico className="size-6" vb="0 0 24 24" sw="1"><path d="M1 1h20v18H1z" fill="#fff" stroke="#999" /><path d="M7 1h6v5H7zM7 12h9v5H7z" fill="#e0532f" stroke="none" /><path d="M7 6h10v5H7z" fill="#3b7fc4" stroke="none" /><path d="M13 13h10v10H13z" fill="#fff" stroke="#666" /><path d="M15 16.500h6M15 19.500h6M20 14.500l-4 7" stroke="#333" /></Ico>} />
        <XBig w="w-[48px]" inline lines={["Format as", "Table"]} icon={<Ico className="size-6" vb="0 0 24 24" sw="1"><path d="M1 1h20v18H1zM1 5h20M1 9h20M1 14h20M6 1v18M11 1v18M16 1v18" stroke="#888" /><path d="M7 6h9v8H7z" fill="#8fb8e0" stroke="none" /><path d="m11 21 3-6 9-9 1 2-8 9z" fill="#3b7fc4" stroke="#666" /></Ico>} />
        <div className="mt-[6px] ml-[3px] flex h-[50px] w-[445px] border border-[#ababab]">
          <div className="grid flex-1 grid-cols-5 gap-x-[5px] gap-y-[6px] px-[3px] py-[4px]">
            {STYLES.map(([t, c]) => <button type="button" key={t} className={"h-[17px] truncate px-[3px] text-left leading-[15px] " + c}>{t}</button>)}
          </div>
          <div className="flex w-[13px] flex-col divide-y divide-[#ababab] border-l border-[#ababab]">
            {[0, 1, 2].map((i) => <span key={i} className="grid flex-1 place-items-center"><Caret className={i ? "" : "rotate-180 text-[#bbb]"} /></span>)}
          </div>
        </div>
      </XGroup>
      <XGroup label="Cells" w="w-[110px]">
        <XBig w="w-[38px]" lines={["Insert"]} icon={<CellsIcon mode="insert" />} />
        <XBig w="w-[34px]" lines={["Delete"]} icon={<CellsIcon mode="delete" />} />
        <XBig w="w-[37px]" lines={["Format"]} icon={<CellsIcon mode="format" />} />
      </XGroup>
      <XGroup label="Editing" w="w-[152px]">
        <div className="flex w-[76px] flex-col pt-[4px] pl-1.5">
          {[[<Sigma className="size-[12px]" />, "AutoSum"], [<Ico className="size-[11px]" vb="0 0 11 11" sw="1"><path d="M.5.500h10v10H.5z" stroke="#888" /><path d="M5.500 2v6M3 6l2.500 2.500L8 6" stroke="#3b7fc4" /></Ico>, "Fill"], [<Eraser className="size-[12px] text-[#e07a8a]" />, "Clear"]].map(([ic, t]) => (
            <button key={t} type="button" className="flex h-[19px] items-center gap-1">{ic}{t}<Caret /></button>
          ))}
        </div>
        <XBig w="w-[38px]" inline lines={["Sort &", "Filter"]} icon={<span className="flex items-center"><span className="text-[9px] leading-[9px] font-bold text-[#3b7fc4]">A<br /><span className="text-[#9b59b6]">Z</span></span><Ico className="size-3.5" vb="0 0 14 14" fill="#777" sw="0"><path d="M0 2h14L9 7v6l-3-2V7z" /></Ico></span>} />
        <XBig w="w-[34px]" inline lines={["Find &", "Select"]} icon={<Binoculars className="size-[22px] fill-[#555] text-[#555]" />} />
      </XGroup>
      <span className="flex-1" />
      <Ico className="mr-2 mt-[64px] size-2" vb="0 0 8 8" sw="1.200"><path d="m1 6 3-3 3 3" /></Ico>
    </div>
  );
}

const MENU = [["HOME", "w-[51px]"], ["INSERT", "w-[52px]"], ["PAGE LAYOUT", "w-[86px]"], ["FORMULAS", "w-[70px]"], ["DATA", "w-[50px]"], ["REVIEW", "w-[51px]"], ["VIEW", "w-[49px]"]];

const isNumber = (t) => /^[\d./]+$/.test(t) || t === "8E+09";

function Excel({ className, file, cell, letters, widths, active, rows, tableH, count, thumb, marks, gaps }) {
  return (
    <section className={"bg-white font-['Open_Sans',sans-serif] text-[9px] text-[#333] " + className}>
      <header className="flex h-[29px] items-center pt-[5px] pr-[6px] pl-2">
        <div className="flex flex-1 items-center gap-[9px]">
          <ExcelGlyph className="size-[14px]" /><Save className="size-[13px] text-[#8250a8]" /><span className="flex items-center gap-1"><Undo2 className="size-[14px] text-[#2a6ebb]" strokeWidth={2.5} /><Caret /></span><span className="flex items-center gap-1 text-[#bbb]"><Redo2 className="size-[14px]" strokeWidth={2.5} /><Caret className="text-[#bbb]" /></span><Caret />
        </div>
        <span className="relative leading-4">{file} - Excel<Mark at={marks.title} /></span>
        <div className="flex flex-1 items-center justify-end gap-[18px] text-[#555]">
          <b className="text-[10px]">?</b>
          {["M.5 1.500h9v7h-9zM5 7V4M3.500 5 5 3.500 6.500 5", "M1 7.500h8", "M.5 3.500h6v5h-6zM2.500 3V1.500h7v5H7", "m1 1 8 8M9 1 1 9"].map((d) => <Ico key={d} className="size-[11px]" vb="0 0 10 10" sw="1.300"><path d={d} /></Ico>)}
        </div>
      </header>
      <nav className="flex h-[19px] border-b border-[#d5d5d5] leading-[19px]">
        <button type="button" className="mr-0.5 w-[48px] bg-[#217346] text-white">FILE</button>
        {MENU.map(([m, w], i) => (
          <button key={m} type="button" className={"text-center whitespace-nowrap " + w + (i ? "" : " -mb-px border border-b-0 border-[#d5d5d5] bg-white leading-[18px] text-[#217346]")}>{m}</button>
        ))}
        <span className="flex-1" />
        <a href="#" className="pr-1.5">Sign in</a>
        <Ico className="h-[19px] w-[20px] bg-[#b5b5b5] text-white" vb="0 0 20 19" fill="#fff" sw="0"><circle cx="10" cy="7" r="4.500" /><path d="M2 19c0-5 3-7 8-7s8 2 8 7z" /></Ico>
      </nav>
      <Ribbon />
      <div className={"mr-[4px] ml-[4px] flex h-[21px] items-stretch text-[10px] " + gaps}>
        <span className="flex w-[83px] items-center justify-between border border-[#d0d0d0] px-[6px]">{cell}<Caret /></span>
        <span className="w-[25px] text-center leading-[19px] text-[#aaa]">⋮</span>
        <span className="flex w-[88px] items-center justify-around border border-[#d0d0d0] text-[#b0b0b0]"><span>✕</span><span>✓</span><i className="font-serif text-[#444]">fx</i></span>
        <span className="ml-[3px] flex flex-1 items-center justify-between border border-[#d0d0d0] pr-[6px] pl-[10px] leading-[19px] text-[#222]"><span><Runs text="案件No" /></span><Ico className="size-2" vb="0 0 8 8" sw="1.500"><path d="m1 2 3 3 3-3" /></Ico></span>
      </div>
      <div className="relative flex">
        <div className="min-w-0 flex-1 overflow-hidden">
          <table className={"w-full table-fixed border-collapse text-[10px] leading-[14px] text-black " + tableH}>
            <colgroup>
              <col className="w-[20px]" />
              {letters.map((l, i) => <col key={l} className={i === letters.length - 1 ? "" : widths[i] || "w-[52px]"} />)}
            </colgroup>
            <thead>
              <tr className="h-[15px] text-[10px] text-[#444]">
                <th className="border-b border-[#aaa] p-0"><Ico className="ml-auto size-[9px] text-[#ccc]" vb="0 0 9 9" fill="#ccc" sw="0"><path d="M9 0v9H0z" /></Ico></th>
                {letters.map((l, i) => (
                  <th key={l} className={"border-x border-b border-x-[#ddd] border-b-[#aaa] p-0 " + (i === active ? "bg-[#d3f0e0] font-bold text-[#217346]" : "font-normal")}>{l}</th>
                ))}
              </tr>
            </thead>
            <tbody>
              {rows.map((r, n) => (
                <tr key={n}>
                  <th className="h-4 border-y border-r-2 border-y-[#c8c8c8] border-r-[#217346] bg-[#e3e3e3] p-0 text-[10px] font-bold text-[#217346]">{n + 1}</th>
                  {letters.map((l, i) => {
                    const t = r[i] || "";
                    const on = i === active;
                    return (
                      <td key={l} className={"h-4 border py-0 whitespace-nowrap " + (isNumber(t) ? "pr-0.5 text-right " : "pl-0.5 ") + (on ? "border-x-2 border-x-[#217346] " + (n ? "border-y-[#bbb] bg-[#c6c6c6]" : "border-y-[#217346]") : "overflow-hidden border-[#d4d4d4]")}>
                        {t && <Runs text={t} />}
                      </td>
                    );
                  })}
                </tr>
              ))}
            </tbody>
          </table>
        </div>
        <div className="flex w-[17px] shrink-0 flex-col items-center bg-[#f0f0f0] px-0.5 pb-2">
          <span className="grid h-[13px] w-full place-items-center border border-[#ababab] bg-white"><Caret className="rotate-180" /></span>
          <span className={"w-full border border-[#ababab] bg-white " + thumb} />
          <span className="flex-1" />
          <span className="grid h-[12px] w-full place-items-center border border-[#ababab] bg-white"><Caret /></span>
        </div>
        <Mark at={marks.head} />
        <Mark at={marks.body} />
      </div>
      <div className="flex h-[24px] border-t border-[#ababab] bg-[#f5f5f5]">
        <span className="flex w-[81px] items-center gap-[22px] pl-[20px] text-[7px] text-[#bbb]"><span>◀</span><span>▶</span></span>
        <button type="button" className="h-[20px] border-x border-b-2 border-x-[#ababab] border-b-[#217346] bg-white px-[8px] text-[10px] leading-[17px] font-bold text-[#217346]">{file}</button>
        <button type="button" aria-label="New sheet" className="mt-[5px] ml-[26px] grid size-[13px] place-items-center rounded-full border border-[#888] leading-none">+</button>
        <span className="flex-1" />
        <span className="pr-[14px] leading-[22px] text-[#999]">⋮</span>
        <span className="mt-1.5 mr-[17px] flex h-[13px] w-[595px]">
          <span className="grid w-3 place-items-center border border-[#ababab] bg-white text-[6px]">◀</span>
          <span className="ml-px w-[545px] border border-[#ababab] bg-white" />
          <span className="flex-1 bg-[#e8e8e8]" />
          <span className="grid w-3 place-items-center border border-[#ababab] bg-white text-[6px]">▶</span>
        </span>
      </div>
      <footer className="flex h-[18px] items-center bg-[#217346] pr-[7px] pl-[6px] text-[9px] text-white">
        <span className="flex-1">READY</span>
        <span className="relative mr-[18px]">COUNT: {count}<Mark at={marks.count} /></span>
        <span className="grid h-full w-[24px] place-items-center bg-[#0a5a2c]"><Ico className="size-[12px]" vb="0 0 12 12" sw="1"><path d="M.5.500h11v11H.5zM4 0v12M8 0v12M0 4h12M0 8h12" /></Ico></span>
        <Ico className="ml-[14px] size-[12px]" vb="0 0 12 12" sw="1"><path d="M.5.500h11v11H.5zM3 3h6v7H3zM4.500 5h3M4.500 7h3" /></Ico>
        <Ico className="ml-[20px] size-[12px]" vb="0 0 12 12" sw="1"><path d="M.5.500h11v11H.5z" /><path d="M2 1h3.500v5H2zM7 1h3v5H7z" fill="#fff" /></Ico>
        <span className="ml-[14px] text-[11px] leading-none">−</span>
        <input type="range" aria-label="Zoom" className="mx-1 h-2 w-[80px] appearance-none bg-[linear-gradient(#fff,#fff)] bg-[length:100%_1px] bg-center bg-no-repeat [&::-webkit-slider-thumb]:h-2 [&::-webkit-slider-thumb]:w-1 [&::-webkit-slider-thumb]:appearance-none [&::-webkit-slider-thumb]:bg-white" />
        <span className="text-[11px] leading-none">+</span>
        <span className="w-[38px] text-right">100%</span>
      </footer>
    </section>
  );
}

const alphabet = "ABCDEFGHIJKLMNOPQRSTUVWXYZ".split("");

const B = "請求書";
const A = "Arrival Notice";
const z = (no, date, type, client, ref) => [no, date, type, client, "0", "0", "0", "0", ref];
const SHEET_JPY = [
  ["請求No", "請求日", "請求タイプ", "請求先", "課税合計", "非課税合計", "税合計", "請求金額", "案件No"],
  z("FCS1112717BILL", "", B, "Rakuten", "FCS1112717"),
  z("FCS1112717AN", "", A, "CCCCCCCCCCCCCCCCC", "FCS1112717"),
  ["FCS1112729BILL-R1", "10/10/2022", B, "Nonｶ", "2938", "1763", "294", "4995", "FCS1112729"],
  z("FCS1112707AN-R3", "10/13/2022", A, "TestC2Company", "FCS1112707"),
  z("FCS1112707BILL-R5", "", B, "testcompany", "FCS1112707"),
  z("FCS1112707AN-R2", "", A, "TestC2Company", "FCS1112707"),
  z("FCS1112707BILL-R4", "", B, "testcompany", "FCS1112707"),
  z("FCS1112707AN-R1", "", A, "TestC2Company", "FCS1112707"),
  z("FCS1112707BILL-R3", "", B, "testcompany", "FCS1112707"),
  ["FCS1112707AN", "", A, "TestC2Company", "55600", "0", "5560", "61160", "FCS1112707"],
  z("FCS1112724BILL-R2", "", B, "請求日", "FCS1112724"),
  z("FCS1112724AN-R1", "", A, "", "FCS1112724"),
  z("FCS1112724BILL-R1", "", B, "請求先名", "FCS1112724"),
  z("FCS1112724BILL", "", B, "請日", "FCS1112724"),
  z("FCS1112724AN", "", A, "", "FCS1112724"),
  ["FCS1112729BILL", "10/13/2022", B, "Nonｶ", "6611", "12046", "662", "19319", "FCS1112729"],
  ["FCS1112710BILL", "10/3/2022", B, "test1client1", "217500", "0", "21750", "239250", "FCS1112710"],
  ["FCS1112707BILL-R1", "10/15/2022", B, "test1client1", "0", "87000", "0", "87000", "FCS1112707"],
  ["FCS1112707BILL", "10/10/2022", B, "test1client1", "72360", "0", "7236", "79596", "FCS1112707"],
  ["FCS1112705BILL-R3", "10/6/2022", B, "test1client1", "3000", "0", "300", "3300", "FCS1112705"],
  z("FCS1112705BILL-R2", "9/28/2022", B, "ァ", "FCS1112705"),
  z("FCS1112705BILL-R1", "10/3/2002", B, "Bill something", "FCS1112705"),
  z("FCS1112705BILL", "", B, "test1client1", "FCS1112705"),
  ["FCS1112704BILL-R1", "10/5/2022", B, "ァ", "1000", "0", "100", "1100", "FCS1112704"],
  z("FCS1112704BILL", "", B, "test1client1", "FCS1112704"),
  z("FCS1112696BILL", "", B, "test1client1", "FCS1112696"),
  z("FCS1112696AN", "", A, "", "FCS1112696"),
  z("FCS111623BILL-R4", "", B, "test1client1", "FCS111623"),
  z("FCS111623BILL-R3", "", B, "非共有", "FCS111623"),
  z("FCS111623AN-R2", "", A, "", "FCS111623"),
  z("FCS111623BILL-R2", "", B, "非共有", "FCS111623"),
  z("FCS111623BILL-R1", "", B, "test1client1", "FCS111623"),
  z("FCS111623AN-R1", "", A, "", "FCS111623"),
  z("FCS111623AN", "", A, "", "FCS111623"),
  z("FCS111623BILL", "", B, "qqq", "FCS111623"),
  ["FCS1112682BILL-R8", "8/16/2022", B, "test1", "792000", "560000", "79200", "1431200", "FCS1112682"],
  ["FCS1112682BILL-R7", "", B, "test1", "1200000", "0", "120000", "1320000", "FCS1112682"],
  z("FCS1112690BILL", "", B, "test", "FCS1112690"),
];

const SHEET_USD = [
  ["請求No", "請求日", "請求タイプ", "請求先", "請求金額", "案件No"],
  ...[
    ["FCS1112717DEBIT", "", "test", "0", "FCS1112717"],
    ["FCS1112724DEBIT-R1", "", "dn123", "0", "FCS1112724"],
    ["FCS1112724DEBIT", "", "請日", "0", "FCS1112724"],
    ["FCS1112729DEBIT-R1", "10/13/2022", "Nonｶか", "1470.6", "FCS1112729"],
    ["FCS1112729DEBIT", "10/13/2022", "ｶかｶか", "1764.72", "FCS1112729"],
    ["FCS1112696DEBIT", "", "ァ", "0", "FCS1112696"],
    ["FCS111623DEBIT-R2", "", "請日", "0", "FCS111623"],
    ["FCS111623DEBIT-R1", "", "no", "0", "FCS111623"],
    ["FCS111623DEBIT", "", "qqq", "0", "FCS111623"],
    ["FCS1112690DEBIT", "8/1/2022", "ＡＤＥＦ", "2.5", "FCS1112690"],
    ["FCS1112688DEBIT-R4", "8/10/2022", "ＡＢＣＤＥＦｄさか", "11", "FCS1112688"],
    ["FCS1112688DEBIT-R3", "10/11/2022", "ＡＢＣＤＥＦｆｓｄか", "0", "FCS1112688"],
    ["FCS1112688DEBIT-R2", "8/1/2022", "test か", "1", "FCS1112688"],
    ["FCS1112688DEBIT", "10/2/2022", "test か", "1", "FCS1112688"],
    ["FCS1112687DEBIT", "10/15/2022", "q", "1", "FCS1112687"],
    ["", "", "t", "", "FCS1112685"],
    ["FCS1112680DEBIT", "10/1/2022", "test", "232.22", "FCS1112680"],
    ["FCS1112682DEBIT-R10", "", "test0812", "657.75", "FCS1112682"],
    ["FCS1112682DEBIT-R9", "", "test0812&859304n", "76086.46", "FCS1112682"],
    ["FCS1112682DEBIT-R8", "", "test0812&dfbaf", "0", "FCS1112682"],
    ["FCS1112682DEBIT-R6", "", "test0812", "0", "FCS1112682"],
    ["FCS1112682DEBIT-R5", "", "test0812&fvsdjka", "0", "FCS1112682"],
    ["FCS1112682DEBIT-R4", "8/12/2022", "test0812", "0", "FCS1112682"],
    ["FCS1112682DEBIT-R3", "8/12/2022", "test0812", "0", "FCS1112682"],
    ["FCS1112682DEBIT-R2", "", "test0812 fsdafg？？", "0", "FCS1112682"],
    ["FCS1112682DEBIT-R1", "", "test0812？？rwefew!!", "0", "FCS1112682"],
    ["FCS1112682DEBIT", "", "test0812？？!!!", "0", "FCS1112682"],
    ["FCS1112683DEBIT", "", "%fbsdljv*bcfsod!!", "1000", "FCS1112683"],
    ["FCS1112681DEBIT", "8/9/2022", "HJHVh%fca bsdljv", "1", "FCS1112681"],
    ["FCS1112670DEBIT-R2", "8/11/2022", "%f fsdf", "0", "FCS1112670"],
    ["FCS1112670DEBIT-R1", "8/11/2022", "ﾝうぇｇｗｇｗ", "0", "FCS1112670"],
    ["FCS1112670DEBIT", "8/11/2022", "ﾝ&&dfsaf", "0", "FCS1112670"],
    ["FCS111606DEBIT-R2", "8/2/2022", "ﾝｆｓｄｆｇｓｄｇ", "0", "FCS111606"],
    ["FCS111606DEBIT-R1", "8/2/2022", "56 test ｶか", "0", "FCS111606"],
    ["FCS111275DEBIT-R8", "6/2/2022", "ｶか test 56", "0", "FCS111275"],
    ["FCS111576DEBIT", "", "test ｶか", "53949.76", "FCS111576"],
    ["FCS111546DEBIT", "10/10/2022", "ぁ", "0", "FCS111546"],
    ["FCS111606DEBIT", "8/5/2022", "ﾝえｓふぇｇ", "100", "FCS111606"],
  ].map(([no, date, client, amount, ref]) => [no, date, "Debit Note", client, amount, ref]),
];

const aaa = (date, k, v, t, ref = "FCS1112707", who = "aaa") => ["", date, who, k, v, k, t, ref];
const SHEET_EXPENSE = [
  ["請求No", "請求日", "請求タイプ", "請求先", "課税合計", "非課税合計", "税合計", "請求金額", "案件No"],
  ...[
    ["bill1028", "10/27/2022", "testhnin_forwarder", "0", "0", "0", "50000", "FCS1112707"],
    ["billing20221028", "10/27/2022", "testhnin_forwarder", "0", "0", "0", "5000", "FCS1112707"],
    ["bill1028_2", "10/27/2022", "testhnin_forwarder", "0", "0", "0", "50", "FCS1112707"],
    ["test", "", "？？fweg", "", "", "", "", "FCS1112707"],
    ["test", "", "？fesagsr", "", "", "", "", "FCS1112707"],
    ["test", "", "", "", "", "", "", "FCS1112707"],
    ["test", "", "", "", "", "", "", "FCS1112707"],
    ["bill1028", "10/27/2022", "testhnin_forwarder", "0", "0", "0", "50000", "FCS1112707"],
    ["bill12345", "10/27/2022", "日", "0", "0", "0", "1000", "FCS1112707"],
    ["bill12345", "", "", "", "", "", "", "FCS1112707"],
    ["bill12345", "", "", "", "", "", "", "FCS1112707"],
    ["21ee21edwq", "10/1/2022", "e12e", "1", "1", "1", "1", "FCS1112727"],
    ["1112728", "10/26/2022", "求日", "1000", "1", "1", "1000", "FCS1112728"],
    ["1112722", "10/26/2022", "請求日", "1", "1", "1", "2000", "FCS1112722"],
    ["bill20221031", "10/30/2022", "forwarder_client", "2", "2", "2", "10000", "FCS1112730"],
    ["FCS1112721", "10/24/2022", "testhnin_forwarder", "0", "0", "10", "45000", "FCS1112721"],
    ["FCS1112717", "10/24/2022", "testhnin_forwarder", "1", "1", "1", "20000", "FCS1112717"],
    ["FCS1112707", "10/24/2022", "testhnin_forwarder", "0", "0", "0", "10000", "FCS1112707"],
    ["FCS1112701", "10/23/2022", "ァ", "3", "2", "10000", "10000", "FCS1112701"],
    ["No2", "10/10/2022", "ｶかｶか", "0", "0", "0", "49155", "FCS1112729"],
    ["No2", "10/10/2022", "ｶかｶか", "0", "0", "0", "49155", "FCS1112729"],
    ["No1", "10/10/2022", "ｶかｶか", "0", "0", "0", "49155", "FCS1112729"],
    aaa("10/6/2022", "10000", "1000", "100000"),
    aaa("10/5/2022", "10000", "1000", "100000"),
    aaa("10/5/2022", "10000", "1000", "100000"),
    aaa("10/4/2022", "10000", "1000", "100000"),
    aaa("10/4/2022", "20000", "2000", "400000"),
    aaa("10/4/2022", "10000", "1000", "200000"),
    aaa("10/4/2022", "10000", "1000", "200000"),
    aaa("10/4/2022", "10000", "1000", "200000"),
    aaa("10/4/2022", "10000", "1000", "200000"),
    aaa("10/4/2022", "10000", "1000", "200000"),
    aaa("10/3/2022", "10000", "1000", "200000", "FCS1112709", ""),
    ["", "", "^%*^(dajksvd%dvakl&&", "", "", "", "", "FCS1112708"],
    ["333", "", "fdsf%dvakfBVKH &&", "", "", "20", "2000", "FCS1112705"],
    ["", "", "", "", "", "", "20000", "FCS1112705"],
    ["33", "", "", "", "", "", "13", "FCS1112704"],
    ["", "", "", "", "", "", "8E+09", "FCS1112704"],
  ].map(([no, date, client, ...rest]) => [no, date, "費用", client, ...rest]),
];

/* Outline arrows that link one window of the walkthrough to the next. */
function Arrows() {
  return (
    <svg className="pointer-events-none absolute top-0 left-0 h-[4096px] w-[3159px]" viewBox="0 0 3159 4096" fill="#fff" stroke="#ed1c24" strokeWidth="4" strokeLinejoin="round" aria-hidden="true">
      <path d="M1881 910h25v65h14l-28 62-28-62h17z" />
      <path d="M2338 1160h71v-15l68 32-68 33v-15h-71z" fill="none" />
      <g strokeWidth="3">
        <path d="M2605 1293q7-5 9 3 1 4-2 8L2487 1431l9 7-41 19 16-42 8 9z" />
        <path d="M1586 1770q7-2 8 4 0 3-4 7L1534 1832l9 9-44 18 19-43 7 8z" />
        <path d="M1587 2743q7-3 9 3 0 3-4 8L1550 2792l10 10-43 15 17-41 10 9z" />
        <path d="M1592 3621q7-2 9 4 0 3-4 8L1524 3712l9 7-42 19 16-43 10 8z" />
      </g>
    </svg>
  );
}

export default function App() {
  return (
    <div className="relative grid min-h-screen w-full grid-cols-2 items-start bg-white">
      <div className="min-w-0">
        <Report id="r1" kind="jpy" className="mr-[15px] ml-[6px]" marks={{ search: "-left-[6px] -right-[7px] -top-2 -bottom-[6px]" }} />
        <Report
          id="r2" kind="jpy" className="mt-[343px] mr-[13px] ml-[8px]"
          marks={{ tab: "-left-6 -right-[26px] -top-[13px] -bottom-[9px]", currency: "-left-[13px] -right-px -top-[11px] bottom-0", table: "-left-[5px] -right-[6px] -top-[4px] -bottom-[15px]" }}
        />
        <Report
          id="r3" kind="usd" className="mt-[10px] mr-[11px] ml-[10px]"
          marks={{ tab: "-left-6 -right-[22px] -top-[13px] -bottom-[11px]", currency: "-left-px -right-[5px] -top-[8px] -bottom-[3px]", table: "-left-[6px] -right-[4px] -top-[3px] -bottom-[12px]" }}
        />
        <Report
          id="r4" kind="expense" side="h-[740px]" className="mt-[5px] mr-[21px]"
          marks={{ tab: "-left-[13px] -right-[19px] -top-[14px] -bottom-[10px]", table: "-left-[9px] -right-[9px] -top-[9px] -bottom-[15px]" }}
        />
      </div>
      <div className="min-w-0">
        <Report
          id="r5" kind="jpy" className="mt-px mr-[14px] ml-[7px]"
          marks={{ counts: "-left-[5px] -top-[9px] h-[66px] w-[296px]", download: "-left-[9px] -right-[5px] -top-[7px] -bottom-[9px]" }}
        />
        <div className="flex h-[422px] items-start gap-[59px] pr-[6px] pl-[82px]">
          <DownloadsWindow />
          <BalanceWindow />
        </div>
        <Excel
          className="mr-[5px] ml-[15px]" file="22-11-01_jpy_amount" cell="I1" count="154" letters={alphabet}
          widths={["w-[101px]", "w-[60px]", "w-[76px]", "w-[139px]", "w-[68px]"]} active={8} rows={SHEET_JPY}
          tableH="h-[660px]" thumb="h-[156px]" gaps="mt-[10px] mb-[10px]"
          marks={{ title: "-left-[18px] -right-[14px] -top-[7px] -bottom-[7px]", count: "-left-3 -right-[15px] -top-[4px] -bottom-[4px]", head: "-left-[8px] top-[12px] h-[22px] w-[703px]", body: "-left-[7px] top-[30px] h-[636px] w-[700px]" }}
        />
        <Excel
          className="mt-[107px] mr-[8px] ml-[13px]" file="22-11-01_usd_amount" cell="F1" count="50" letters={alphabet}
          widths={["w-[115px]", "w-[61px]", "w-[71px]", "w-[139px]", "w-[58px]", "w-[64px]"]} active={5} rows={SHEET_USD}
          tableH="h-[648px]" thumb="h-[260px]" gaps="mt-[8px] mb-[9px]"
          marks={{ title: "-left-[18px] -right-[14px] -top-[11px] -bottom-[11px]", count: "-left-3 -right-[15px] -top-[4px] -bottom-[4px]", head: "-left-px top-[11px] h-[23px] w-[532px]", body: "-left-px top-[31px] h-[622px] w-[536px]" }}
        />
        <Excel
          className="mt-[52px] ml-[21px]" file="22-11-01_expense" cell="I1" count="91" letters={[...alphabet, "AA"]}
          widths={["w-[52px]", "w-[61px]", "w-[51px]", "w-[170px]", "w-[52px]", "w-[52px]", "w-[52px]", "w-[52px]", "w-[64px]"]} active={8} rows={SHEET_EXPENSE}
          tableH="h-[648px]" thumb="h-[267px]" gaps="mt-[8px] mb-[9px]"
          marks={{ title: "-left-[23px] -right-3 -top-4 -bottom-[14px]", count: "-left-[15px] -right-[20px] -top-[6px] -bottom-[4px]", head: "-left-[4px] top-[10px] h-[27px] w-[633px]", body: "-left-[10px] top-[32px] h-[626px] w-[643px]" }}
        />
      </div>
      <Arrows />
    </div>
  );
}
